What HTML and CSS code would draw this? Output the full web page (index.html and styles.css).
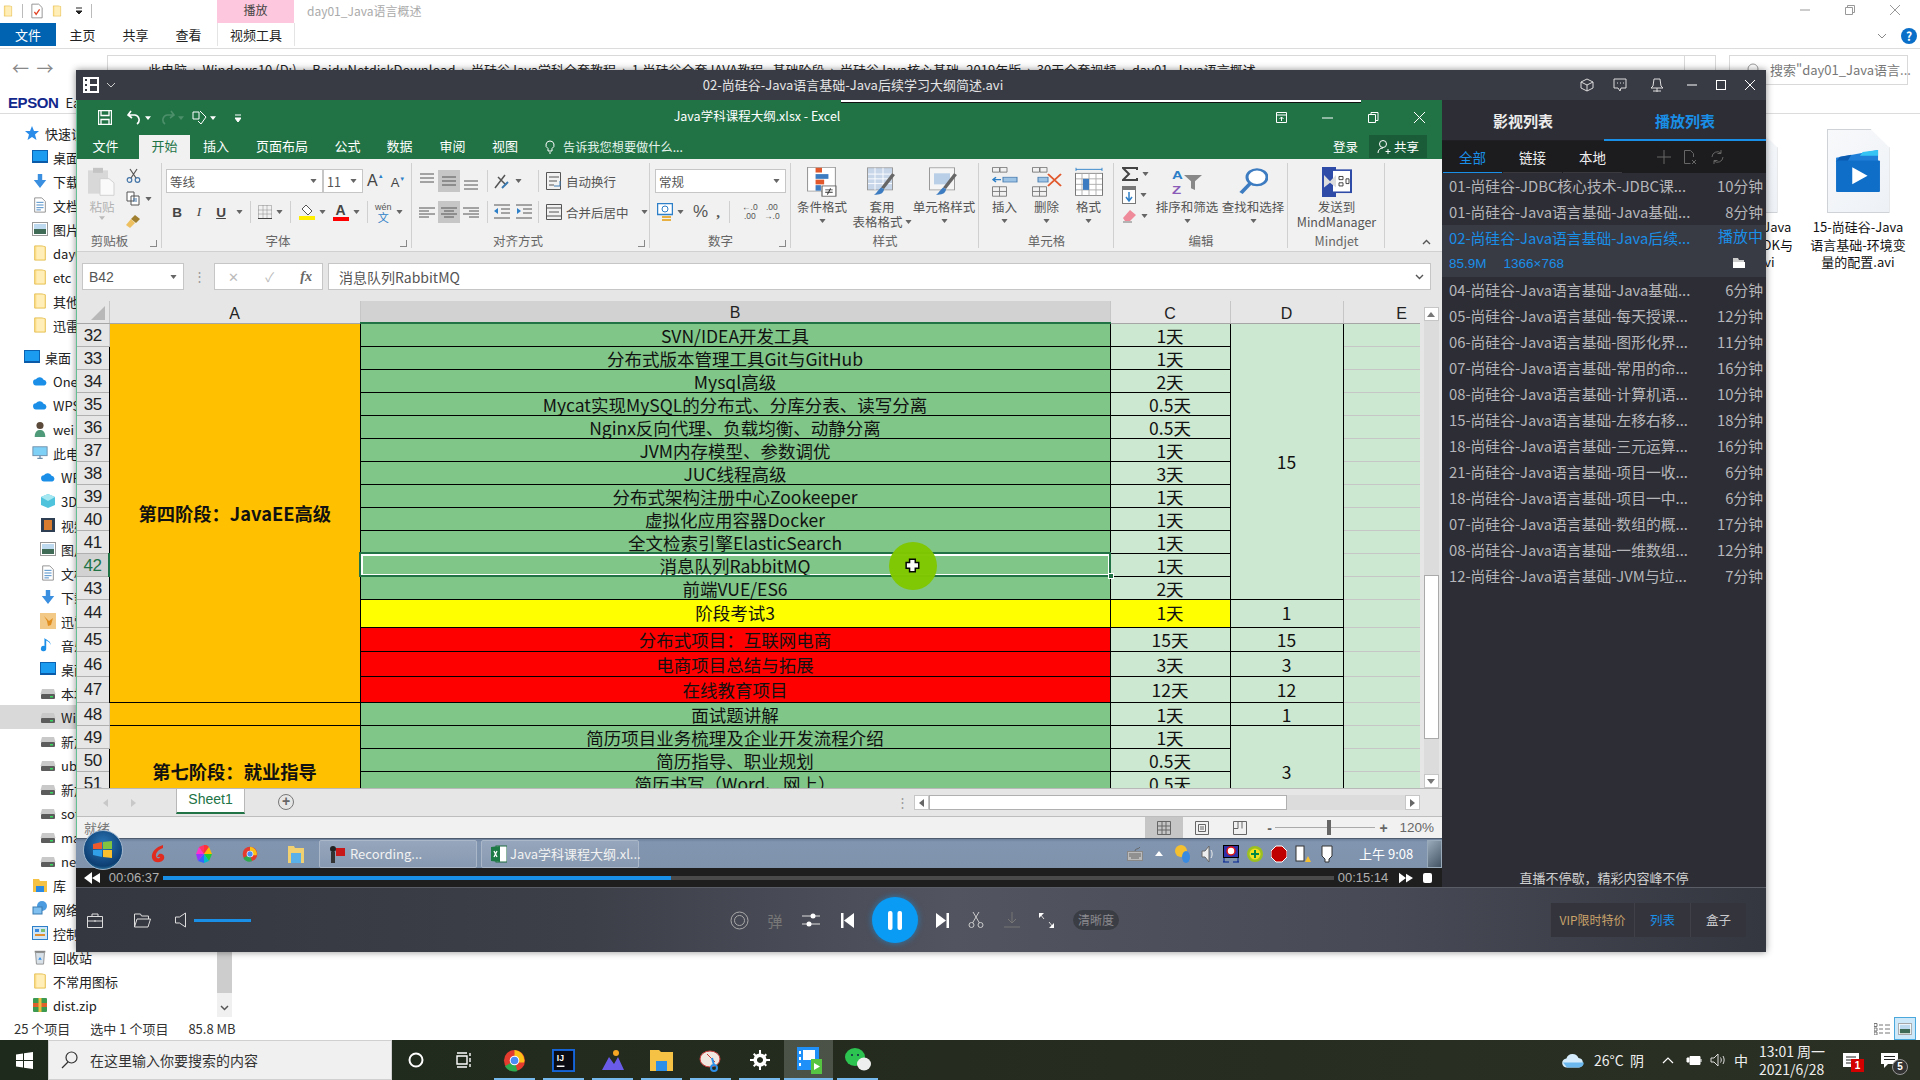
FILE: index.html
```html
<!DOCTYPE html>
<html lang="zh-CN">
<head>
<meta charset="utf-8">
<title>day01_Java语言概述</title>
<link rel="stylesheet" href="styles.css">
</head>
<body>
<svg class="defs" width="0" height="0">
  <symbol id="folder" viewBox="0 0 14 18"><path d="M1 1h8l4 1v15H1z" fill="#ffe08d" stroke="#e3bd4f"/><path d="M3 2h9v14H3z" fill="#ffeeb8"/></symbol>
  <symbol id="disk" viewBox="0 0 16 16"><path d="M2 4h12l1.5 5h-15z" fill="#c9c9c9"/><rect x="1" y="9" width="14" height="5" rx="1" fill="#5c5c5c"/><rect x="10" y="11" width="3" height="1.5" fill="#38d860"/></symbol>
  <symbol id="desk" viewBox="0 0 16 14"><rect x=".5" y=".5" width="15" height="12" fill="#1b9cf0" stroke="#0a62b0"/><path d="M.5 11h15v2H.5z" fill="#0a5aa8"/></symbol>
  <symbol id="wcloud" viewBox="0 0 18 12"><path d="M5 11a3.5 3.5 0 0 1-.6-7A5 5 0 0 1 13 4.6 3.3 3.3 0 0 1 14 11z" fill="#1b8fe8"/></symbol>
  <symbol id="down" viewBox="0 0 16 18"><path d="M5.5 1h5v7H15l-7 9-7-9h4.5z" fill="#3b8fe0"/></symbol>
  <symbol id="doc" viewBox="0 0 14 18"><path d="M1 1h8l4 4v12H1z" fill="#fff" stroke="#8a8a8a"/><path d="M3 6h8M3 9h8M3 12h8M3 14.500h5" stroke="#3a7fc0"/></symbol>
  <symbol id="pic" viewBox="0 0 16 14"><rect x=".5" y=".5" width="15" height="13" fill="#fff" stroke="#999"/><rect x="2" y="2" width="12" height="5" fill="#bcd9ef"/><rect x="2" y="7" width="12" height="5" fill="#3f6a55"/></symbol>
  <symbol id="pc" viewBox="0 0 18 16"><rect x="1" y="1" width="16" height="10" fill="#7fd0f7" stroke="#6a8ca8"/><path d="M6 14h6M9 11v3" stroke="#6a8ca8" stroke-width="1.500"/></symbol>
  <symbol id="caret" viewBox="0 0 8 5"><path d="M0 0h8L4 5z" fill="#666"/></symbol>
</svg>

<div class="explorer">
  <div class="ex-title">
    <div class="qat">
      <svg class="ico16" viewBox="0 0 10 18"><use href="#folder"/></svg>
      <span class="qsep"></span>
      <svg class="ico16" viewBox="0 0 14 18"><path d="M1 1h8l4 4v12H1z" fill="#fff" stroke="#888"/><path d="M4 10l2 3 4-6" fill="none" stroke="#e04020" stroke-width="1.500"/></svg>
      <svg class="ico16" viewBox="0 0 10 18"><use href="#folder"/></svg>
      <svg class="ico8" viewBox="0 0 8 8"><path d="M1 1h6M1 4h6L4 7z" stroke="#222" fill="#222"/></svg>
      <span class="qsep"></span>
    </div>
    <div class="ex-play">播放</div>
    <div class="ex-name">day01_Java语言概述</div>
    <div class="ex-winbtns">
      <svg width="10" height="10" viewBox="0 0 10 10"><path d="M0 5h10" stroke="#999"/></svg>
      <svg width="10" height="10" viewBox="0 0 10 10"><path d="M.5 2.500h7v7h-7zM2.500 2.500v-2h7v7h-2" fill="none" stroke="#999"/></svg>
      <svg width="10" height="10" viewBox="0 0 10 10"><path d="M0 0l10 10M10 0L0 10" stroke="#999"/></svg>
    </div>
  </div>
  <div class="ex-tabs">
    <span class="ex-file">文件</span>
    <span class="ex-tab">主页</span>
    <span class="ex-tab">共享</span>
    <span class="ex-tab">查看</span>
    <span class="ex-tool">视频工具</span>
    <span class="ex-tabright">
      <svg width="10" height="6" viewBox="0 0 10 6"><path d="M1 1l4 4 4-4" fill="none" stroke="#888"/></svg>
      <span class="ex-help">?</span>
    </span>
  </div>
  <div class="ex-nav">
    <span class="nav-arrows">←&nbsp;&nbsp;→</span>
    <div class="ex-addr"><span class="addr-text">此电脑 &nbsp;›&nbsp; Windows10 (D:) &nbsp;›&nbsp; BaiduNetdiskDownload &nbsp;›&nbsp; 尚硅谷Java学科全套教程 &nbsp;›&nbsp; 1.尚硅谷全套JAVA教程--基础阶段 &nbsp;›&nbsp; 尚硅谷Java核心基础_2019年版 &nbsp;›&nbsp; 30天全套视频 &nbsp;›&nbsp; day01_Java语言概述</span><span class="addr-end"></span></div>
    <div class="ex-search"><svg width="14" height="14" viewBox="0 0 14 14"><circle cx="8" cy="6" r="5" fill="none" stroke="#999"/><path d="M4.500 9.500L1 13" stroke="#999"/></svg>搜索"day01_Java语言...</div>
  </div>
  <div class="ex-sub"><b class="epson">EPSON</b> Easy Photo Print</div>
  <div class="ex-main">
    <div class="ex-side">
      <div class="sgroup">
        <div class="si l1"><svg viewBox="0 0 16 16"><path d="M8 1l2 5h5l-4 3.500 1.500 5.500L8 12l-4.500 3L5 9.500 1 6h5z" fill="#2b8be8"/></svg>快速访问</div>
        <div class="si l2"><svg viewBox="0 0 16 14"><use href="#desk"/></svg>桌面</div>
        <div class="si l2"><svg viewBox="0 0 16 18"><use href="#down"/></svg>下载</div>
        <div class="si l2"><svg viewBox="0 0 14 18"><use href="#doc"/></svg>文档</div>
        <div class="si l2"><svg viewBox="0 0 16 14"><use href="#pic"/></svg>图片</div>
        <div class="si l2"><svg viewBox="0 0 14 18"><use href="#folder"/></svg>day01_Java语言概述</div>
        <div class="si l2"><svg viewBox="0 0 14 18"><use href="#folder"/></svg>etc</div>
        <div class="si l2"><svg viewBox="0 0 14 18"><use href="#folder"/></svg>其他</div>
        <div class="si l2"><svg viewBox="0 0 14 18"><use href="#folder"/></svg>迅雷下载</div>
      </div>
      <div class="sgroup gap8">
        <div class="si l1"><svg viewBox="0 0 16 14"><use href="#desk"/></svg>桌面</div>
        <div class="si l2"><svg viewBox="0 0 18 12"><use href="#wcloud"/></svg>OneDrive</div>
        <div class="si l2"><svg viewBox="0 0 18 12"><use href="#wcloud"/></svg>WPS网盘</div>
        <div class="si l2"><svg viewBox="0 0 16 18"><circle cx="8" cy="5" r="4" fill="#5b4a3a"/><path d="M2 18c0-6 3-8 6-8s6 2 6 8z" fill="#4f9a78"/></svg>wei</div>
        <div class="si l2"><svg viewBox="0 0 18 16"><use href="#pc"/></svg>此电脑</div>
        <div class="si l3"><svg viewBox="0 0 18 12"><use href="#wcloud"/></svg>WPS网盘</div>
        <div class="si l3"><svg viewBox="0 0 16 16"><path d="M8 1l7 3v8l-7 3-7-3V4z" fill="#4fc3dc"/><path d="M8 8L1 4l7-3 7 3z" fill="#a5e8f2"/></svg>3D 对象</div>
        <div class="si l3"><svg viewBox="0 0 16 16"><rect x="1" y="1" width="14" height="14" fill="#2d3e52"/><rect x="4" y="3" width="8" height="10" fill="#d87c30"/></svg>视频</div>
        <div class="si l3"><svg viewBox="0 0 16 14"><use href="#pic"/></svg>图片</div>
        <div class="si l3"><svg viewBox="0 0 14 18"><use href="#doc"/></svg>文档</div>
        <div class="si l3"><svg viewBox="0 0 16 18"><use href="#down"/></svg>下载</div>
        <div class="si l3"><svg viewBox="0 0 16 16"><rect width="16" height="16" fill="#f3c987"/><path d="M4 3l5 5 4-3-2 7-3 1-1-5z" fill="#e08e20"/></svg>迅雷下载</div>
        <div class="si l3"><svg viewBox="0 0 16 18"><path d="M6 2v11a3 3 0 1 1-2-2.800V1c3 3 7 3 7 8-1-3-3-4-5-5z" fill="#1b8fe8"/></svg>音乐</div>
        <div class="si l3"><svg viewBox="0 0 16 14"><use href="#desk"/></svg>桌面</div>
        <div class="si l3"><svg viewBox="0 0 16 16"><use href="#disk"/></svg>本地磁盘 (C:)</div>
        <div class="si l3 sel-row"><svg viewBox="0 0 16 16"><use href="#disk"/></svg>Windows10 (D:)</div>
        <div class="si l3"><svg viewBox="0 0 16 16"><use href="#disk"/></svg>新加卷 (E:)</div>
        <div class="si l3"><svg viewBox="0 0 16 16"><use href="#disk"/></svg>ubuntu (F:)</div>
        <div class="si l3"><svg viewBox="0 0 16 16"><use href="#disk"/></svg>新加卷 (G:)</div>
        <div class="si l3"><svg viewBox="0 0 16 16"><use href="#disk"/></svg>soft (H:)</div>
        <div class="si l3"><svg viewBox="0 0 16 16"><use href="#disk"/></svg>mac (I:)</div>
        <div class="si l3"><svg viewBox="0 0 16 16"><use href="#disk"/></svg>new (J:)</div>
        <div class="si l2"><svg viewBox="0 0 16 16"><path d="M1 2h6l1 2h7v11H1z" fill="#f6c245"/><rect x="4" y="9" width="8" height="6" fill="#2c8be0"/></svg>库</div>
        <div class="si l2"><svg viewBox="0 0 16 16"><circle cx="10" cy="5" r="5" fill="#4a9be0"/><rect x="1" y="6" width="9" height="7" fill="#7fc0f0" stroke="#3a7ab0"/></svg>网络</div>
        <div class="si l2"><svg viewBox="0 0 16 14"><rect x=".5" y=".5" width="15" height="13" fill="#cfe6f8" stroke="#2d7fc8"/><rect x="3" y="3" width="4" height="3" fill="#3a8ae0"/><rect x="9" y="3" width="4" height="3" fill="#7ac070"/><rect x="3" y="8" width="10" height="2" fill="#e09030"/></svg>控制面板</div>
        <div class="si l2"><svg viewBox="0 0 14 18"><path d="M2 4h10l-1 13H3z" fill="#d8e0e8" stroke="#8c8c8c"/><path d="M1 3h12" stroke="#888" stroke-width="2"/><path d="M5 12l2-3 2 3z" fill="#2b8be8"/></svg>回收站</div>
        <div class="si l2"><svg viewBox="0 0 14 18"><use href="#folder"/></svg>不常用图标</div>
        <div class="si l2"><svg viewBox="0 0 16 16"><rect x="1" y="1" width="14" height="14" rx="1" fill="#3c9a50"/><rect x="1" y="6" width="14" height="4" fill="#e0602c"/><rect x="6.500" y="1" width="3" height="14" fill="#e8c040"/></svg>dist.zip</div>
      </div>
      <div class="side-scroll">
        <div class="ss-thumb"></div>
        <svg width="9" height="6" viewBox="0 0 9 6"><path d="M1 1l3.500 3.500L8 1" fill="none" stroke="#555" stroke-width="1.500"/></svg>
      </div>
    </div>
    <div class="ex-files">
      <div class="tile">
        <div class="fileicon"></div>
        <p>14-尚硅谷-Java<br>语言基础-JDK与<br>JRE的.avi</p>
      </div>
      <div class="tile">
        <div class="fileicon">
          <svg class="clap" viewBox="0 0 46 44"><path d="M0 8l44-8v12H0z" fill="#1f7fd8"/><path d="M4 7l12-2-4 7H0z" fill="#0a5ab0"/><path d="M28 2l16-2v6H25z" fill="#35c4f4"/><rect y="11" width="46" height="33" rx="1" fill="#0f6ec8"/><path d="M17 18l16 9-16 9z" fill="#fff"/></svg>
        </div>
        <p>15-尚硅谷-Java<br>语言基础-环境变<br>量的配置.avi</p>
      </div>
    </div>
  </div>
  <div class="ex-status">
    <span>25 个项目</span><span>选中 1 个项目</span><span>85.8 MB</span>
    <span class="views">
      <svg width="17" height="12" viewBox="0 0 17 12"><path d="M0 .5h3v3H0zM0 5h3v3H0zM0 9h3v3H0zM5 2h4M11 2h5M5 6h4M11 6h5M5 10h4M11 10h5" fill="none" stroke="#777"/></svg>
      <span class="view-on"><svg width="14" height="12" viewBox="0 0 16 14"><use href="#pic"/></svg></span>
    </span>
  </div>
  <div class="taskbar">
    <span class="tb-start"><svg width="17" height="17" viewBox="0 0 17 17"><path d="M0 2.400l7-1v6.600H0zM8 1.200L17 0v8H8zM0 9h7v6.600l-7-1zM8 9h9v8l-9-1.200z" fill="#fff"/></svg></span>
    <span class="tb-search"><svg width="17" height="18" viewBox="0 0 17 18"><circle cx="10.500" cy="6.500" r="5.500" fill="none" stroke="#333" stroke-width="1.200"/><path d="M7 11L1 17" stroke="#333" stroke-width="1.200"/></svg>在这里输入你要搜索的内容</span>
    <span class="tb-btn"><svg width="16" height="16" viewBox="0 0 16 16"><circle cx="8" cy="8" r="6.500" fill="none" stroke="#fff" stroke-width="2"/></svg></span>
    <span class="tb-btn"><svg width="17" height="16" viewBox="0 0 17 16"><path d="M1 1h10M1 15h10M1 4h10v8H1zM14 1v3M14 6v4M14 12v3" fill="none" stroke="#fff" stroke-width="1.400"/></svg></span>
    <span class="tb-btn on first-on"><svg width="23" height="23" viewBox="0 0 24 24"><circle cx="12" cy="12" r="11" fill="#e33b2e"/><path d="M12 12L2 18A11 11 0 0 0 15 23z" fill="#2da94f"/><path d="M12 1a11 11 0 0 1 10 13H12z" fill="#fbc116"/><circle cx="12" cy="12" r="5" fill="#fff"/><circle cx="12" cy="12" r="4" fill="#4a8bf5"/></svg></span>
    <span class="tb-btn on"><svg width="23" height="23" viewBox="0 0 24 24"><rect width="24" height="24" fill="#1565d8"/><rect x="2" y="2" width="20" height="20" fill="#0a0a12"/><text x="5" y="13" font-size="9" font-weight="700" font-family="Liberation Sans" fill="#fff">IJ</text><path d="M5 18h8" stroke="#fff" stroke-width="1.500"/></svg></span>
    <span class="tb-btn on"><svg width="24" height="22" viewBox="0 0 24 22"><path d="M1 21L8 8l5 7 4-7 6 13z" fill="#6a5ce8"/><circle cx="15" cy="4" r="3" fill="#f5a623"/></svg></span>
    <span class="tb-btn on"><svg width="23" height="22" viewBox="0 0 23 22"><path d="M0 1h9l2 2h12v19H0z" fill="#f6c245"/><rect x="6" y="12" width="11" height="10" fill="#2d8ee8"/></svg></span>
    <span class="tb-btn on"><svg width="24" height="24" viewBox="0 0 24 24"><ellipse cx="11" cy="11" rx="10" ry="8" fill="#f0e8e0" stroke="#c83a3a"/><path d="M8 6l8 8" stroke="#c83a3a"/><circle cx="15" cy="20" r="3" fill="none" stroke="#2d8ee8" stroke-width="2"/><path d="M15 17l-2-7" stroke="#2d8ee8" stroke-width="2"/></svg></span>
    <span class="tb-btn on"><svg width="20" height="20" viewBox="0 0 20 20"><path d="M10 3.500a6.500 6.500 0 1 0 .01 0zM10 7a3 3 0 1 1-.01 0z" fill="#fff" fill-rule="evenodd"/><path d="M9 0h2v4H9zM9 16h2v4H9zM0 9h4v2H0zM16 9h4v2h-4zM3 4.400l1.400-1.400 3 3-1.400 1.400zM12.600 13.400l1.400-1.400 3 3-1.400 1.400zM3 15.600l3-3 1.400 1.400-3 3zM12.600 6.600l3-3 1.400 1.400-3 3z" fill="#fff"/></svg></span>
    <span class="tb-btn on act"><svg width="26" height="27" viewBox="0 0 26 27"><rect x="1" y="0" width="22" height="23" fill="#1e90f8"/><rect x="7" y="3" width="12" height="10" fill="#fff"/><path d="M3 4h2v3H3zM3 10h2v3H3zM3 16h2v3H3z" fill="#fff"/><rect x="15" y="12" width="11" height="15" fill="#56c440"/><path d="M18 16l6 3.500-6 3.500z" fill="#fff"/></svg></span>
    <span class="tb-btn on"><svg width="26" height="24" viewBox="0 0 26 24"><ellipse cx="10" cy="9" rx="10" ry="9" fill="#2dc350"/><ellipse cx="19" cy="16" rx="7" ry="6.500" fill="#eee"/><circle cx="7" cy="7" r="1" fill="#124"/><circle cx="13" cy="7" r="1" fill="#124"/></svg></span>
    <span class="tray">
      <svg width="22" height="16" viewBox="0 0 22 16"><path d="M5 15.500a4.500 4.500 0 0 1-.6-9A6.500 6.500 0 0 1 16.500 6a4.800 4.800 0 0 1 .5 9.500z" fill="#d4ecfb"/><path d="M5 15.500h12a4.800 4.800 0 0 0 4.800-5H1z" fill="#6ab8ee"/></svg>
      <span class="t-temp">26°C&nbsp;&nbsp;阴</span>
      <svg class="t-up" width="12" height="7" viewBox="0 0 12 7"><path d="M1 6l5-5 5 5" fill="none" stroke="#fff" stroke-width="1.200"/></svg>
      <svg width="16" height="12" viewBox="0 0 16 12"><path d="M4 2.500h10v8H4zM1 4v4h2V4zM15 5v3" fill="#fff" stroke="#fff"/></svg>
      <svg width="16" height="14" viewBox="0 0 16 14"><path d="M1 5h3l4-4v12L4 9H1zM10.500 4.500c1 1.500 1 3.500 0 5M13 3c1.500 2.500 1.500 5.500 0 8" fill="none" stroke="#ddd"/></svg>
      <span class="t-ime">中</span>
      <span class="t-clock">13:01 周一<br>2021/6/28</span>
      <span class="t-note"><svg width="16" height="14" viewBox="0 0 16 14"><path d="M0 0h16v14H0z" fill="#fff"/><path d="M3 4h10M3 7h10M3 10h6" stroke="#222"/></svg><i class="badge-red">1</i></span>
      <span class="t-action"><svg width="17" height="15" viewBox="0 0 17 15"><path d="M0 0h17v11H7l-4 4v-4H0z" fill="#fff"/><path d="M3 3.500h11M3 6.500h11" stroke="#222"/></svg><i class="badge-round">5</i></span>
    </span>
  </div>
</div>

<div class="player">
  <div class="p-title">
    <svg class="p-logo" width="16" height="16" viewBox="0 0 16 16"><path d="M0 0h16v16H0zM2 2v2h2V2zM2 7v2h2V7zM2 12v2h2v-2zM7 2v5h7V2zM7 9v5h7V9z" fill="#fff" fill-rule="evenodd"/></svg>
    <svg width="10" height="6" viewBox="0 0 10 6"><path d="M1 1l4 4 4-4" fill="none" stroke="#ccc"/></svg>
    <span class="p-name">02-尚硅谷-Java语言基础-Java后续学习大纲简述.avi</span>
    <span class="p-winbtns">
      <svg width="14" height="14" viewBox="0 0 14 14"><path d="M7 1l6 3v6l-6 3-6-3V4zM1 4l6 3 6-3M7 7v6" fill="none" stroke="#ddd"/></svg>
      <svg width="14" height="14" viewBox="0 0 14 14"><path d="M1 1h12v9H8l-1 3-2-3H1z" fill="none" stroke="#ddd"/><path d="M4 5h1M7 5h1M10 5h1" stroke="#ddd"/></svg>
      <svg class="pw-gap" width="12" height="14" viewBox="0 0 12 14"><path d="M3 1h6l1 7 2 2H0l2-2zM6 10v4M2 13h8" fill="none" stroke="#ddd"/></svg>
      <svg class="pw-gap" width="10" height="14" viewBox="0 0 10 14"><path d="M0 7h10" stroke="#fff"/></svg>
      <svg width="10" height="14" viewBox="0 0 10 14"><rect x=".5" y="2.500" width="9" height="9" fill="none" stroke="#fff"/></svg>
      <svg width="10" height="14" viewBox="0 0 10 14"><path d="M0 2l10 10M10 2L0 12" stroke="#fff"/></svg>
    </span>
  </div>
  <div class="p-main">
    <div class="p-left">
      <div class="excel">
        <div class="xl-head">
          <span class="xl-qat">
            <svg width="14" height="15" viewBox="0 0 14 15"><path d="M.5.500h13v14H.5zM3 .500v5h8v-5M3 14.500v-5h8v5" fill="none" stroke="#fff" stroke-width="1.300"/></svg>
            <svg class="q0" width="15" height="15" viewBox="0 0 15 15"><path d="M4 1L1 5l4 3M1 5h7a5 5 0 0 1 2 9" fill="none" stroke="#fff" stroke-width="1.600"/></svg>
            <svg width="6" height="4" viewBox="0 0 8 5"><path d="M0 0h8L4 5z" fill="#fff"/></svg>
            <svg class="q1" width="15" height="15" viewBox="0 0 15 15"><path d="M11 1l3 4-4 3M14 5H7a5 5 0 0 0-2 9" fill="none" stroke="#4c8f6a" stroke-width="1.600"/></svg>
            <svg width="6" height="4" viewBox="0 0 8 5"><path d="M0 0h8L4 5z" fill="#4c8f6a"/></svg>
            <svg class="q3" width="15" height="15" viewBox="0 0 15 15"><path d="M1 2h6v7H1zM8 1l6 6-5 7-3-3" fill="none" stroke="#fff"/></svg>
            <svg width="6" height="4" viewBox="0 0 8 5"><path d="M0 0h8L4 5z" fill="#fff"/></svg>
            <svg class="q2" width="6" height="8" viewBox="0 0 6 8"><path d="M0 1h6M0 4h6L3 8z" fill="#fff" stroke="#fff"/></svg>
          </span>
          <span class="xl-name">Java学科课程大纲.xlsx - Excel</span>
          <span class="xl-win">
            <svg width="11" height="11" viewBox="0 0 11 11"><path d="M.5.500h10v10H.5zM.5 3h10M5.500 9V5M3.500 7l2-2 2 2" fill="none" stroke="#fff"/></svg>
            <svg width="11" height="11" viewBox="0 0 11 11"><path d="M0 6h11" stroke="#fff"/></svg>
            <svg width="11" height="11" viewBox="0 0 11 11"><path d="M.5 2.500h7v8h-7zM3 2.500v-2h7v8H8" fill="none" stroke="#fff"/></svg>
            <svg width="11" height="11" viewBox="0 0 11 11"><path d="M0 0l11 11M11 0L0 11" stroke="#fff"/></svg>
          </span>
        </div>
        <div class="xl-tabs">
          <span class="xt w61">文件</span><span class="xt w51 act">开始</span><span class="xt w52">插入</span><span class="xt w80">页面布局</span><span class="xt w51">公式</span><span class="xt w53">数据</span><span class="xt w53">审阅</span><span class="xt w52">视图</span>
          <span class="xt-tell"><svg width="10" height="14" viewBox="0 0 10 14"><path d="M5 1a4 4 0 0 1 2 7.500V11H3V8.500A4 4 0 0 1 5 1zM4 13h2" fill="none" stroke="#fff"/></svg>告诉我您想要做什么...</span>
          <span class="xt-login">登录</span>
          <span class="xt-share"><svg width="15" height="15" viewBox="0 0 15 15"><circle cx="6" cy="5" r="3.500" fill="none" stroke="#fff"/><path d="M1 14c0-3 2-5 5-5M11 10v5M8.500 12.500h5" fill="none" stroke="#fff"/></svg>共享</span>
        </div>
        <div class="ribbon">
          <div class="grp g-clip">
            <div class="gb clip">
              <div class="paste">
                <svg width="30" height="30" viewBox="0 0 30 36" preserveAspectRatio="none"><rect x="1" y="4" width="20" height="28" fill="#d8d8d8"/><rect x="6" y="1" width="10" height="6" fill="#c4c4c4"/><path d="M13 14h9l5 5v15H13z" fill="#fafafa" stroke="#cfcfcf"/></svg>
                <span>粘贴</span>
                <svg width="6" height="4" viewBox="0 0 8 5"><path d="M0 0h8L4 5z" fill="#bbb"/></svg>
              </div>
              <div class="clipcol">
                <svg width="15" height="15" viewBox="0 0 15 15"><circle cx="3.500" cy="12" r="2.300" fill="none" stroke="#4475a8" stroke-width="1.200"/><circle cx="11.500" cy="12" r="2.300" fill="none" stroke="#4475a8" stroke-width="1.200"/><path d="M4 1l6 9M11 1L5 10" stroke="#555" stroke-width="1.200"/></svg>
                <span class="fx"><svg width="15" height="15" viewBox="0 0 15 15"><path d="M1 1h7v9H1zM5 5h8v9H5z" fill="#fff" stroke="#555"/><path d="M7 8h4M7 10h4" stroke="#4475a8"/></svg><svg class="cr" viewBox="0 0 8 5"><use href="#caret"/></svg></span>
                <svg width="15" height="15" viewBox="0 0 15 15"><path d="M9 1l5 4-4 4-5-4z" fill="#a08030"/><path d="M5 5l4 4-5 5-4-3z" fill="#eec060"/></svg>
              </div>
            </div>
            <div class="gl gl-clip">剪贴板<i class="launch"></i></div>
          </div>
          <div class="grp g-font">
            <div class="gb stack">
              <div class="rr">
                <span class="inp w156">等线<svg class="cr" viewBox="0 0 8 5"><use href="#caret"/></svg></span><span class="inp w40">11<svg class="cr" viewBox="0 0 8 5"><use href="#caret"/></svg></span>
                <span class="growa">A<sup>▲</sup></span><span class="growa sm">A<sup>▼</sup></span>
              </div>
              <div class="rr ml6">
                <b class="fb">B</b><i class="fb fi">I</i><u class="fb">U</u><svg class="cr" viewBox="0 0 8 5"><use href="#caret"/></svg>
                <span class="vs"></span>
                <svg width="14" height="14" viewBox="0 0 14 14"><path d="M.5.500h13v13H.5zM5 .500v13M9 .500v13M.5 5h13M.5 9h13" fill="none" stroke="#888" stroke-dasharray="1 1"/><path d="M0 13.500h14" stroke="#444"/></svg><svg class="cr" viewBox="0 0 8 5"><use href="#caret"/></svg>
                <span class="vs"></span>
                <span class="bucket"><svg width="14" height="12" viewBox="0 0 14 12"><path d="M6 1l6 6-4 4-6-6z" fill="#fff" stroke="#555"/></svg><em class="swy"></em></span><svg class="cr" viewBox="0 0 8 5"><use href="#caret"/></svg>
                <span class="bucket fa">A<em class="swr"></em></span><svg class="cr" viewBox="0 0 8 5"><use href="#caret"/></svg>
                <span class="vs"></span>
                <span class="wen">wén<b>文</b></span><svg class="cr" viewBox="0 0 8 5"><use href="#caret"/></svg>
              </div>
            </div>
            <div class="gl gl-font">字体<i class="launch"></i></div>
          </div>
          <div class="grp g-align">
            <div class="gb stack">
              <div class="rr ml4">
                <svg class="al" viewBox="0 0 22 22"><path d="M4 4h14M4 8h14M4 12h14" stroke="#555"/></svg>
                <svg class="al on" viewBox="0 0 22 22"><path d="M4 7h14M4 11h14M4 15h14" stroke="#555"/></svg>
                <svg class="al" viewBox="0 0 22 22"><path d="M4 11h14M4 15h14M4 19h14" stroke="#555"/></svg>
                <span class="vs"></span>
                <svg width="18" height="18" viewBox="0 0 18 18"><path d="M2 16L12 3M5 5l8 8" stroke="#555" stroke-width="1.500"/><path d="M9 16l6-6" stroke="#3a7ab0" stroke-width="2"/></svg><svg class="cr" viewBox="0 0 8 5"><use href="#caret"/></svg>
                <span class="vs vs2a"></span>
                <span class="lab"><svg width="16" height="18" viewBox="0 0 16 18"><path d="M.5.500h14v17H.5zM3 5h10M3 9h8M3 13h5" fill="none" stroke="#555"/><path d="M8 14h6v-5" fill="none" stroke="#3a7ab0"/></svg>自动换行</span>
              </div>
              <div class="rr ml4">
                <svg class="al" viewBox="0 0 22 22"><path d="M3 7h16M3 10h10M3 13h16M3 16h10" stroke="#555"/></svg>
                <svg class="al on" viewBox="0 0 22 22"><path d="M3 7h16M6 10h10M3 13h16M6 16h10" stroke="#555"/></svg>
                <svg class="al" viewBox="0 0 22 22"><path d="M3 7h16M9 10h10M3 13h16M9 16h10" stroke="#555"/></svg>
                <span class="vs"></span>
                <svg width="18" height="18" viewBox="0 0 18 18"><path d="M1 2h16M8 6h9M8 10h9M1 15h16" stroke="#555"/><path d="M1 8l4-3v6zM5 8H3" fill="#2d7fc8"/></svg>
                <svg class="ind2" width="18" height="18" viewBox="0 0 18 18"><path d="M1 2h16M8 6h9M8 10h9M1 15h16" stroke="#555"/><path d="M6 8L2 5v6z" fill="#2d7fc8"/></svg>
                <span class="vs vs2b"></span>
                <span class="lab"><svg width="16" height="16" viewBox="0 0 16 16"><path d="M.5.500h15v15H.5zM.5 4h15M.5 12h15M3 8h10" fill="none" stroke="#555"/></svg>合并后居中<svg class="cr sp" viewBox="0 0 8 5"><use href="#caret"/></svg></span>
              </div>
            </div>
            <div class="gl gl-align">对齐方式<i class="launch"></i></div>
          </div>
          <div class="grp g-num">
            <div class="gb stack">
              <div class="rr"><span class="inp w130">常规<svg class="cr" viewBox="0 0 8 5"><use href="#caret"/></svg></span></div>
              <div class="rr ml6">
                <svg width="16" height="18" viewBox="0 0 16 18"><rect x=".5" y=".5" width="15" height="11" fill="#fff" stroke="#2d7fc8" stroke-width="1.500"/><circle cx="8" cy="6" r="3" fill="none" stroke="#2d7fc8"/><rect x="5" y="13" width="9" height="2" fill="#e8b040"/><rect x="5" y="16" width="9" height="2" fill="#e8b040"/></svg><svg class="cr" viewBox="0 0 8 5"><use href="#caret"/></svg>
                <span class="pct">%</span><span class="cma">,</span>
                <span class="vs"></span>
                <span class="dec">←.0<br>.00</span><span class="dec">.00<br>→.0</span>
              </div>
            </div>
            <div class="gl">数字<i class="launch"></i></div>
          </div>
          <div class="grp g-style">
            <div class="gb bigs">
              <div class="big w62"><svg width="30" height="30" viewBox="0 0 28 38" preserveAspectRatio="none"><rect x=".5" y=".5" width="26" height="30" fill="#fff" stroke="#999"/><rect x="8" y="1" width="6" height="6" fill="#e0582c"/><rect x="8" y="9" width="12" height="6" fill="#3d7cc0"/><rect x="8" y="16" width="8" height="6" fill="#e0582c"/><rect x="8" y="23" width="5" height="7" fill="#3d7cc0"/><rect x="14" y="24" width="13" height="13" fill="#fff" stroke="#555"/><path d="M17 29h7M17 32h7M22 27l-3 8" stroke="#333"/></svg><span>条件格式</span><svg class="cr" viewBox="0 0 8 5"><use href="#caret"/></svg></div>
              <div class="big w58"><svg width="30" height="30" viewBox="0 0 30 38" preserveAspectRatio="none"><rect x=".5" y="1" width="25" height="28" fill="#c8d6ea" stroke="#999"/><path d="M1 9h24M1 15h24M1 21h24M8 1v28M16 1v28" stroke="#fff"/><path d="M28 10L17 28l-3-2L25 8z" fill="#666"/><path d="M14 26l3 2c0 5-4 8-10 7 3-2 4-6 7-9z" fill="#3d7cc0"/></svg><span>套用</span><span class="l2line">表格格式<svg class="cr" viewBox="0 0 8 5"><use href="#caret"/></svg></span></div>
              <div class="big w66"><svg width="30" height="30" viewBox="0 0 30 38" preserveAspectRatio="none"><rect x=".5" y="1" width="25" height="28" fill="#f5f5f5" stroke="#999"/><rect x="5" y="8" width="16" height="14" fill="#b9cfe8"/><path d="M28 10L17 28l-3-2L25 8z" fill="#666"/><path d="M14 26l3 2c0 5-4 8-10 7 3-2 4-6 7-9z" fill="#3d7cc0"/></svg><span>单元格样式</span><svg class="cr" viewBox="0 0 8 5"><use href="#caret"/></svg></div>
            </div>
            <div class="gl">样式</div>
          </div>
          <div class="grp g-cell">
            <div class="gb bigs ctr">
              <div class="big w42"><svg width="26" height="30" viewBox="0 0 26 38" preserveAspectRatio="none"><path d="M.5.500h7v6h-7zM8 .500h7v6H8zM.5 25h14v12H.5zM7.500 25v12M.5 31h14" fill="none" stroke="#777"/><rect x="11" y="13" width="14" height="6" fill="#9cc2e4" stroke="#4a7eb0"/><path d="M1 16h8M4 13l-3 3 3 3" fill="none" stroke="#2d7fc8" stroke-width="1.500"/></svg><span>插入</span><svg class="cr" viewBox="0 0 8 5"><use href="#caret"/></svg></div>
              <div class="big w42"><svg width="30" height="30" viewBox="0 0 30 38" preserveAspectRatio="none"><path d="M.5.500h7v6h-7zM8 .500h7v6H8zM.5 25h14v12H.5zM7.500 25v12M.5 31h14" fill="none" stroke="#777"/><rect x="6" y="13" width="10" height="6" fill="#9cc2e4" stroke="#4a7eb0"/><path d="M16 9l13 15M29 9L16 24" stroke="#e0582c" stroke-width="2"/></svg><span>删除</span><svg class="cr" viewBox="0 0 8 5"><use href="#caret"/></svg></div>
              <div class="big w42"><svg width="28" height="30" viewBox="0 0 28 38" preserveAspectRatio="none"><path d="M1 3h26M1 1v4M27 1v4" stroke="#2d7fc8"/><rect x=".5" y="8" width="27" height="28" fill="#fff" stroke="#777"/><path d="M7 8v28M14 8v28M21 8v28M1 15h26M1 22h26M1 29h26" stroke="#aaa"/><rect x="8" y="15" width="6" height="14" fill="#3d7cc0"/></svg><span>格式</span><svg class="cr" viewBox="0 0 8 5"><use href="#caret"/></svg></div>
            </div>
            <div class="gl">单元格</div>
          </div>
          <div class="grp g-edit">
            <div class="gb editg">
              <div class="editcol">
                <span class="fx"><svg width="16" height="14" viewBox="0 0 16 14"><path d="M15 3V1H1l6 6-6 6h14v-2" fill="none" stroke="#444" stroke-width="2"/></svg><svg class="cr" viewBox="0 0 8 5"><use href="#caret"/></svg></span>
                <span class="fx"><svg width="14" height="18" viewBox="0 0 14 18"><rect x=".5" y=".5" width="13" height="17" fill="#fff" stroke="#777"/><rect y="0" width="14" height="4" fill="#777"/><path d="M7 6v9M4 11l3 4 3-4" fill="none" stroke="#2d7fc8" stroke-width="1.500"/></svg><svg class="cr" viewBox="0 0 8 5"><use href="#caret"/></svg></span>
                <span class="fx"><svg width="15" height="14" viewBox="0 0 15 14"><path d="M8 1l6 5-6 6-5 0-2-3z" fill="#ef8a9a"/><path d="M1 13h9" stroke="#777"/></svg><svg class="cr" viewBox="0 0 8 5"><use href="#caret"/></svg></span>
              </div>
              <div class="big w66"><svg width="30" height="30" viewBox="0 0 30 38" preserveAspectRatio="none"><text x="0" y="15" font-size="15" font-family="Liberation Sans" font-weight="700" fill="#2d7fc8">A</text><text x="0" y="34" font-size="15" font-family="Liberation Sans" font-weight="700" fill="#8a5cb8">Z</text><path d="M12 10h18l-7 8v11l-4-2v-9z" fill="#888"/></svg><span>排序和筛选</span><svg class="cr" viewBox="0 0 8 5"><use href="#caret"/></svg></div>
              <div class="big w66"><svg width="30" height="30" viewBox="0 0 30 38" preserveAspectRatio="none"><circle cx="19" cy="13" r="10" fill="#fff" stroke="#3d7cc0" stroke-width="3"/><path d="M12 21L3 33" stroke="#3d7cc0" stroke-width="4"/></svg><span>查找和选择</span><svg class="cr" viewBox="0 0 8 5"><use href="#caret"/></svg></div>
            </div>
            <div class="gl">编辑</div>
          </div>
          <div class="grp g-mind">
            <div class="gb bigs ctr">
              <div class="big w97"><svg width="30" height="30" viewBox="0 0 30 38" preserveAspectRatio="none"><rect x="0" y="0" width="14" height="38" fill="#2f4ba8"/><rect x="10" y="4" width="19" height="28" fill="#fff" stroke="#2f4ba8" stroke-width="2"/><path d="M2 10l6 8 6-8v16l-6-6-6 6z" fill="#ddd"/><path d="M17 12h4v4h-4zM17 20h4v4h-4zM24 15h3v6h-3z" fill="none" stroke="#333"/></svg><span>发送到</span><span class="l2line">MindManager</span></div>
            </div>
            <div class="gl">Mindjet</div>
          </div>
          <span class="collapse"><svg width="9" height="6" viewBox="0 0 9 6"><path d="M1 5l3.500-3.500L8 5" fill="none" stroke="#555" stroke-width="1.400"/></svg></span>
        </div>
        <div class="fbar">
          <span class="namebox">B42<svg class="cr" viewBox="0 0 8 5"><use href="#caret"/></svg></span>
          <span class="fdots">⋮</span>
          <span class="fxbox"><b class="x">✕</b><b class="x">✓</b><i>fx</i></span>
          <span class="finput">消息队列RabbitMQ<svg width="9" height="6" viewBox="0 0 9 6"><path d="M1 1l3.500 3.500L8 1" fill="none" stroke="#555" stroke-width="1.400"/></svg></span>
        </div>
        <div class="gridwrap">
          <div class="gridclip">
            <table class="sheet">
              <colgroup><col class="c0"><col class="ca"><col class="cb"><col class="cc"><col class="cd"><col class="ce"></colgroup>
              <thead>
                <tr class="hh"><th class="corner"></th><th>A</th><th class="hsel">B</th><th>C</th><th>D</th><th class="he">E</th></tr>
              </thead>
              <tbody>
                <tr class="h23"><th>32</th><td class="or stage" rowspan="16">第四阶段：JavaEE高级</td><td class="gr">SVN/IDEA开发工具</td><td class="lt">1天</td><td class="lt" rowspan="12">15</td><td class="e"></td></tr>
                <tr class="h23"><th>33</th><td class="gr">分布式版本管理工具Git与GitHub</td><td class="lt">1天</td><td class="e"></td></tr>
                <tr class="h23"><th>34</th><td class="gr">Mysql高级</td><td class="lt">2天</td><td class="e"></td></tr>
                <tr class="h23"><th>35</th><td class="gr">Mycat实现MySQL的分布式、分库分表、读写分离</td><td class="lt">0.5天</td><td class="e"></td></tr>
                <tr class="h23"><th>36</th><td class="gr">Nginx反向代理、负载均衡、动静分离</td><td class="lt">0.5天</td><td class="e"></td></tr>
                <tr class="h23"><th>37</th><td class="gr">JVM内存模型、参数调优</td><td class="lt">1天</td><td class="e"></td></tr>
                <tr class="h23"><th>38</th><td class="gr">JUC线程高级</td><td class="lt">3天</td><td class="e"></td></tr>
                <tr class="h23"><th>39</th><td class="gr">分布式架构注册中心Zookeeper</td><td class="lt">1天</td><td class="e"></td></tr>
                <tr class="h23"><th>40</th><td class="gr">虚拟化应用容器Docker</td><td class="lt">1天</td><td class="e"></td></tr>
                <tr class="h23"><th>41</th><td class="gr">全文检索引擎ElasticSearch</td><td class="lt">1天</td><td class="e"></td></tr>
                <tr class="h23"><th class="hsel-row">42</th><td class="gr sel">消息队列RabbitMQ</td><td class="lt">1天</td><td class="e"></td></tr>
                <tr class="h23"><th>43</th><td class="gr">前端VUE/ES6</td><td class="lt">2天</td><td class="e"></td></tr>
                <tr class="h28 mid"><th>44</th><td class="yl">阶段考试3</td><td class="yl">1天</td><td class="lt">1</td><td class="e"></td></tr>
                <tr class="h24 mid"><th>45</th><td class="rd">分布式项目：互联网电商</td><td class="lt">15天</td><td class="lt">15</td><td class="e"></td></tr>
                <tr class="h25 mid"><th>46</th><td class="rd">电商项目总结与拓展</td><td class="lt">3天</td><td class="lt">3</td><td class="e"></td></tr>
                <tr class="h26 mid"><th>47</th><td class="rd">在线教育项目</td><td class="lt">12天</td><td class="lt">12</td><td class="e"></td></tr>
                <tr class="h23"><th>48</th><td class="or"></td><td class="gr">面试题讲解</td><td class="lt">1天</td><td class="lt">1</td><td class="e"></td></tr>
                <tr class="h23"><th>49</th><td class="or stage" rowspan="4">第七阶段：就业指导</td><td class="gr">简历项目业务梳理及企业开发流程介绍</td><td class="lt">1天</td><td class="lt" rowspan="4">3</td><td class="e"></td></tr>
                <tr class="h23"><th>50</th><td class="gr">简历指导、职业规划</td><td class="lt">0.5天</td><td class="e"></td></tr>
                <tr class="h23"><th>51</th><td class="gr">简历书写（Word、网上）</td><td class="lt">0.5天</td><td class="e"></td></tr>
                <tr class="h23"><th>52</th><td class="gr"></td><td class="lt"></td><td class="e"></td></tr>
              </tbody>
            </table>
            <span class="fill-handle"></span>
            <span class="cursor-dot"><svg width="16" height="16" viewBox="0 0 14 14"><path d="M4 1h5v3h3v5H9v3H4V9H1V4h3z" fill="#fff" stroke="#000" stroke-width="1.300"/></svg></span>
          </div>
          <div class="vscroll">
            <span class="vbtn"><svg width="8" height="5" viewBox="0 0 8 5"><path d="M0 5h8L4 0z" fill="#777"/></svg></span>
            <span class="vtrack"><span class="vthumb"></span></span>
            <span class="vbtn"><svg width="8" height="5" viewBox="0 0 8 5"><path d="M0 0h8L4 5z" fill="#777"/></svg></span>
          </div>
        </div>
        <div class="sheetbar">
          <span class="sb-nav"><svg width="5" height="8" viewBox="0 0 5 8"><path d="M5 0v8L0 4z" fill="#c8c8c8"/></svg><svg width="5" height="8" viewBox="0 0 5 8"><path d="M0 0v8l5-4z" fill="#c8c8c8"/></svg></span>
          <span class="sb-tab">Sheet1</span>
          <span class="sb-add">+</span>
          <span class="sb-dots">⋮</span>
          <span class="hscroll">
            <span class="hbtn"><svg width="5" height="8" viewBox="0 0 5 8"><path d="M5 0v8L0 4z" fill="#666"/></svg></span>
            <span class="hthumb"></span>
            <span class="htrack"></span>
            <span class="hbtn"><svg width="5" height="8" viewBox="0 0 5 8"><path d="M0 0v8l5-4z" fill="#666"/></svg></span>
          </span>
        </div>
        <div class="xstatus">
          <span>就绪</span>
          <span class="xs-right">
            <span class="vw on"><svg width="14" height="14" viewBox="0 0 14 14"><path d="M.5.500h13v13H.5zM5 .500v13M9 .500v13M.5 5h13M.5 9h13" fill="none" stroke="#666"/></svg></span>
            <span class="vw"><svg width="14" height="14" viewBox="0 0 14 14"><path d="M.5.500h13v13H.5zM3.500 3.500h7v7h-7zM5 6h4M5 8h4" fill="none" stroke="#666"/></svg></span>
            <span class="vw"><svg width="14" height="14" viewBox="0 0 14 14"><path d="M.5.500h13v13H.5zM5 .500v7M.5 7.500H5M9 .500v7" fill="none" stroke="#666"/></svg></span>
            <span class="zm zm-minus">-</span>
            <span class="slider"><i></i></span>
            <span class="zm">+</span>
            <span class="zpct">120%</span>
          </span>
        </div>
      </div>
      <div class="win7">
        <span class="orb"><svg width="22" height="22" viewBox="0 0 22 22"><path d="M1 5l9-2v7H1z" fill="#ef5a2c"/><path d="M11 3l9-1v8h-9z" fill="#82c342"/><path d="M1 11h9v7l-9-2z" fill="#32a0e8"/><path d="M11 11h9v8l-9-1z" fill="#fbc02d"/></svg></span>
        <span class="w7ic"><svg width="16" height="20" viewBox="0 0 16 20"><path d="M13 1C6 3 1 8 2 14c1 5 9 6 12 1 1-3-1-6-5-5L7 13l3 0c-1 3-5 1-4-3 1-3 4-5 7-6z" fill="#e02c20"/></svg></span>
        <span class="w7ic"><svg width="16" height="18" viewBox="0 0 16 18"><path d="M8 9L8 0a5 5 0 0 1 5 2z" fill="#f33"/><path d="M8 9l5-7 3 7z" fill="#fb0"/><path d="M8 9h8l-3 7z" fill="#2c3"/><path d="M8 9l5 7-5 2z" fill="#0bc"/><path d="M8 9v9l-6-2z" fill="#36f"/><path d="M8 9l-6 7-2-7z" fill="#93f"/><path d="M8 9H0l3-7z" fill="#f3c"/><path d="M8 9L3 2l5-2z" fill="#f36"/></svg></span>
        <span class="w7ic"><svg width="16" height="18" viewBox="0 0 24 24"><circle cx="12" cy="12" r="11" fill="#e33b2e"/><path d="M12 12L2 18A11 11 0 0 0 15 23z" fill="#2da94f"/><path d="M12 1a11 11 0 0 1 10 13H12z" fill="#fbc116"/><circle cx="12" cy="12" r="5" fill="#fff"/><circle cx="12" cy="12" r="4" fill="#4a8bf5"/></svg></span>
        <span class="w7ic"><svg width="16" height="18" viewBox="0 0 16 18"><path d="M0 1h6l1 2h9v15H0z" fill="#f0d070"/><rect x="3" y="8" width="10" height="10" fill="#5ab0e8"/></svg></span>
        <span class="w7task first"><svg width="16" height="20" viewBox="0 0 16 20"><circle cx="4" cy="5" r="3" fill="#222"/><rect x="2" y="8" width="4" height="11" fill="#333"/><rect x="7" y="4" width="9" height="8" fill="#c81818"/></svg>Recording...</span>
        <span class="w7task w7second"><svg width="16" height="18" viewBox="0 0 16 18"><rect x="5" y="1" width="11" height="16" fill="#fff" stroke="#1d6b3f"/><path d="M0 2l9-1v16l-9-1z" fill="#1d7a44"/><path d="M3 6l3 6M6 6l-3 6" stroke="#fff" stroke-width="1.300"/></svg>Java学科课程大纲.xl...</span>
        <span class="w7tray">
          <svg width="16" height="14" viewBox="0 0 16 14"><rect x=".5" y="4.500" width="15" height="9" fill="#bbb" stroke="#888"/><path d="M2 7h12M2 9h12M4 11h8M8 4c0-3 3-1 5-4" fill="none" stroke="#666"/></svg>
          <svg class="tr-c" width="8" height="5" viewBox="0 0 8 5"><path d="M0 5h8L4 0z" fill="#fff"/></svg>
          <svg width="16" height="20" viewBox="0 0 16 20"><circle cx="6" cy="7" r="6" fill="#f5c030"/><ellipse cx="11" cy="13" rx="4" ry="6" fill="#3a8ae0"/></svg>
          <svg class="tr-s" width="12" height="18" viewBox="0 0 12 18"><path d="M1 6h3l4-5v16l-4-5H1z" fill="#eee" stroke="#666"/><path d="M10 5c1.500 2 1.500 6 0 8" fill="none" stroke="#eee"/></svg>
          <svg width="16" height="18" viewBox="0 0 16 18"><rect x=".5" y=".5" width="15" height="12" fill="#3030a8" stroke="#000"/><circle cx="8" cy="6" r="4" fill="#fff" stroke="#e01010" stroke-width="1.500"/><path d="M0 17h6M10 17h6M1 13v4M15 13v4" stroke="#002090"/></svg>
          <svg width="16" height="16" viewBox="0 0 16 16"><circle cx="8" cy="8" r="8" fill="#9cc020"/><circle cx="8" cy="8" r="5.500" fill="#f0e020"/><path d="M8 4v8M4 8h8" stroke="#084" stroke-width="2"/></svg>
          <svg width="16" height="18" viewBox="0 0 16 18"><path d="M5 1h6l5 5v6l-5 5H5l-5-5V6z" fill="#c00000" stroke="#fff"/></svg>
          <svg width="16" height="18" viewBox="0 0 16 18"><rect x="1" y="1" width="8" height="15" fill="#fff" stroke="#333"/><path d="M10 17l3-6 3 6z" fill="#f5c030"/></svg>
          <svg width="16" height="18" viewBox="0 0 16 18"><path d="M3 1h10v10l-3 3v3H6v-3L3 11z" fill="#fff" stroke="#333"/></svg>
          <span class="w7clock">上午 9:08</span>
          <span class="w7show"></span>
        </span>
      </div>
      <div class="pbar">
        <svg width="16" height="12" viewBox="0 0 16 12"><path d="M8 0v12L0 6zM16 1v10L8 6z" fill="#fff"/></svg>
        <span class="ptime">00:06:37</span>
        <span class="ptrack"><span class="pplayed"></span></span>
        <span class="ptime p2">00:15:14</span>
        <svg class="pfw" width="14" height="12" viewBox="0 0 16 12"><path d="M0 0v12l8-6zM8 1v10l8-5z" fill="#fff"/></svg>
        <span class="pstop"></span>
      </div>
    </div>
    <div class="panel">
      <div class="pn-tabs"><span class="pt">影视列表</span><span class="pt on">播放列表</span></div>
      <div class="pn-sub">
        <span class="ps on">全部</span><span class="ps">链接</span><span class="ps">本地</span>
        <span class="ps-ic">
          <svg width="14" height="14" viewBox="0 0 14 14"><path d="M7 0v14M0 7h14" stroke="#666"/></svg>
          <svg width="13" height="14" viewBox="0 0 13 14"><path d="M.5.500h6l3 3V7M.5.500v13h6M8 10l4 4M12 10l-4 4" fill="none" stroke="#666"/></svg>
          <svg width="15" height="14" viewBox="0 0 15 14"><path d="M2 7a5.500 5.500 0 0 1 9-4M13 7a5.500 5.500 0 0 1-9 4M11 0v3.500H7.500M4 14v-3.500h3.500" fill="none" stroke="#666"/></svg>
        </span>
      </div>
      <ul class="plist">
        <li><span class="pn">01-尚硅谷-JDBC核心技术-JDBC课...</span><span>10分钟</span></li>
        <li><span class="pn">01-尚硅谷-Java语言基础-Java基础...</span><span>8分钟</span></li>
        <li class="cur">
          <div class="cur1"><span class="pn">02-尚硅谷-Java语言基础-Java后续...</span><span class="playing">播放中</span></div>
          <div class="cur2"><span>85.9M</span><span class="res">1366×768</span><svg width="12" height="10" viewBox="0 0 12 10"><path d="M0 0h5l1 2h5v8H0z" fill="#ccc"/><path d="M0 4h12v6H0z" fill="#fff"/></svg></div>
        </li>
        <li><span class="pn">04-尚硅谷-Java语言基础-Java基础...</span><span>6分钟</span></li>
        <li><span class="pn">05-尚硅谷-Java语言基础-每天授课...</span><span>12分钟</span></li>
        <li><span class="pn">06-尚硅谷-Java语言基础-图形化界...</span><span>11分钟</span></li>
        <li><span class="pn">07-尚硅谷-Java语言基础-常用的命...</span><span>16分钟</span></li>
        <li><span class="pn">08-尚硅谷-Java语言基础-计算机语...</span><span>10分钟</span></li>
        <li><span class="pn">15-尚硅谷-Java语言基础-左移右移...</span><span>18分钟</span></li>
        <li><span class="pn">18-尚硅谷-Java语言基础-三元运算...</span><span>16分钟</span></li>
        <li><span class="pn">21-尚硅谷-Java语言基础-项目一收...</span><span>6分钟</span></li>
        <li><span class="pn">18-尚硅谷-Java语言基础-项目一中...</span><span>6分钟</span></li>
        <li><span class="pn">07-尚硅谷-Java语言基础-数组的概...</span><span>17分钟</span></li>
        <li><span class="pn">08-尚硅谷-Java语言基础-一维数组...</span><span>12分钟</span></li>
        <li><span class="pn">12-尚硅谷-Java语言基础-JVM与垃...</span><span>7分钟</span></li>
      </ul>
      <div class="pn-foot">直播不停歇，精彩内容峰不停</div>
    </div>
  </div>
  <div class="controls">
    <div class="c-left">
      <svg width="16" height="15" viewBox="0 0 16 15"><path d="M.5 3.500h15v11H.5zM5 3.500V1h6v2.500M.5 8h15M8 7v2" fill="none" stroke="#ddd"/></svg>
      <svg class="cl2" width="17" height="15" viewBox="0 0 17 15"><path d="M.5 14V1h6l1 2h7v3M.5 14L3 6h13.500l-2.500 8z" fill="none" stroke="#ddd"/></svg>
      <svg class="cl3" width="11" height="16" viewBox="0 0 11 16"><path d="M.5 5h4l6-4v14l-6-4h-4z" fill="none" stroke="#ddd"/></svg>
      <span class="vol"></span>
    </div>
    <div class="c-mid">
      <span class="ci"><svg width="19" height="19" viewBox="0 0 19 19"><circle cx="9.500" cy="9.500" r="8.500" fill="none" stroke="#aaa"/><circle cx="9.500" cy="9.500" r="5" fill="none" stroke="#aaa"/></svg></span>
      <span class="ci dim">弹</span>
      <span class="ci"><svg width="18" height="16" viewBox="0 0 18 16"><path d="M0 4h18M0 12h18" stroke="#ddd"/><circle cx="11" cy="4" r="2.500" fill="#fff"/><circle cx="7" cy="12" r="2.500" fill="#fff"/></svg></span>
      <span class="ci"><svg width="13" height="15" viewBox="0 0 13 15"><path d="M0 0h2.500v15H0zM13 0v15L3 7.500z" fill="#fff"/></svg></span>
      <span class="playbtn"><svg width="14" height="19" viewBox="0 0 14 19"><rect width="4.500" height="19" rx="2" fill="#fff"/><rect x="9.500" width="4.500" height="19" rx="2" fill="#fff"/></svg></span>
      <span class="ci"><svg width="13" height="15" viewBox="0 0 13 15"><path d="M10.500 0H13v15h-2.500zM0 0v15l10-7.500z" fill="#fff"/></svg></span>
      <span class="ci ci-tight"><svg width="16" height="16" viewBox="0 0 16 16"><circle cx="3.500" cy="13" r="2.500" fill="none" stroke="#ccc"/><circle cx="12.500" cy="13" r="2.500" fill="none" stroke="#ccc"/><path d="M4.500 11L11 0M11.500 11L5 0" stroke="#ccc"/></svg></span>
      <span class="ci"><svg width="16" height="16" viewBox="0 0 16 16"><path d="M8 0v11M4 7l4 4 4-4M0 15h16" fill="none" stroke="#777"/></svg></span>
      <span class="ci ci-tight"><svg width="15" height="15" viewBox="0 0 15 15"><path d="M1 1l4 5M14 14l-4-5" stroke="#ddd"/><path d="M0 0h5L0 5zM15 15h-5l5-5z" fill="#fff"/></svg></span>
      <span class="clarity">清晰度</span>
    </div>
    <div class="c-right">
      <span class="cbtn vip">VIP限时特价</span><span class="cbtn blue">列表</span><span class="cbtn">盒子</span>
    </div>
  </div>
  <span class="p-line"></span>
</div>
</body>
</html>
```
FILE: styles.css
```css
* { box-sizing: border-box; }
html, body { margin: 0; padding: 0; }
body {
  width: 1920px; height: 1080px; overflow: hidden; position: relative; background: #fff;
  font-family: "Noto Sans CJK SC", "Noto Sans", "Liberation Sans", sans-serif;
  font-size: 13px; color: #222;
}
svg { display: block; flex: none; }
.defs { position: absolute; }
.cr { width: 7px; height: 4px; margin-left: 4px; }

/* explorer window */
.explorer { height: 1080px; display: flex; flex-direction: column; background: #fff; }
.ex-title { height: 23px; display: flex; align-items: flex-start; flex: none; }
.qat { width: 217px; display: flex; align-items: center; gap: 8px; padding: 3px 0 0 2px; }
.ico16 { width: 12px; height: 16px; }
.ico8 { width: 8px; height: 8px; margin-left: 4px; }
.qsep { width: 1px; height: 14px; background: #bbb; }
.ex-play { width: 77px; height: 23px; background: #fdc8dd; text-align: center; line-height: 20px; font-size: 12px; color: #444; }
.ex-name { margin-left: 13px; line-height: 22px; color: #aaa; font-size: 12px; }
.ex-winbtns { margin-left: auto; display: flex; gap: 35px; padding: 5px 20px 0 0; }
.ex-tabs { height: 26px; flex: none; display: flex; align-items: stretch; border-bottom: 1px solid #dcdcdc; font-size: 13px; }
.ex-file { width: 56px; height: 23px; background: #0063b1; color: #fff; text-align: center; line-height: 23px; }
.ex-tab { width: 53px; height: 23px; text-align: center; line-height: 24px; }
.ex-tool { width: 78px; margin-left: 2px; height: 23px; text-align: center; line-height: 24px; border-left: 1px solid #e4e4e4; border-right: 1px solid #e4e4e4; }
.ex-tabright { margin-left: auto; display: flex; align-items: center; gap: 14px; padding: 0 3px 0 0; }
.ex-help { width: 16px; height: 16px; border-radius: 50%; background: #0a6fc8; color: #fff; font-weight: 700; font-size: 12px; line-height: 16px; text-align: center; }
.ex-nav { height: 45px; flex: none; display: flex; align-items: flex-start; padding-top: 6px; }
.nav-arrows { width: 107px; color: #888; padding-left: 12px; font-size: 17px; line-height: 26px; }
.ex-addr { width: 1609px; height: 30px; border: 1px solid #d9d9d9; padding-left: 40px; line-height: 28px; font-size: 13px; white-space: nowrap; display: flex; }
.addr-text { flex: 1; overflow: hidden; }
.addr-end { width: 31px; border-left: 1px solid #d9d9d9; }
.ex-search { width: 179px; height: 30px; margin-left: 13px; border: 1px solid #d9d9d9; padding-left: 15px; line-height: 28px; color: #777; white-space: nowrap; display: flex; align-items: center; gap: 11px; font-size: 13px; }
.ex-sub { flex: none; padding-left: 8px; border-bottom: 1px solid #dcdcdc; height: 20px; line-height: 18px; white-space: nowrap; overflow: hidden; }
.epson { color: #13288c; font-size: 15px; letter-spacing: -.4px; font-family: "Liberation Sans", sans-serif; margin-right: 4px; }
.ex-main { flex: 1; display: flex; min-height: 0; position: relative; }
.ex-side { width: 232px; padding-top: 7px; position: relative; }
.sgroup.gap8 { margin-top: 8px; }
.si { height: 24px; display: flex; align-items: center; white-space: nowrap; overflow: hidden; font-size: 13px; }
.si svg { width: 16px; height: 16px; margin-right: 5px; }
.si.l1 { padding-left: 24px; }
.si.l2 { padding-left: 32px; }
.si.l3 { padding-left: 40px; }
.sel-row { background: #d9d9d9; }
.side-scroll { position: absolute; right: 0; bottom: 0; width: 15px; height: 70px; background: #f0f0f0; display: flex; flex-direction: column; align-items: center; justify-content: space-between; padding-bottom: 6px; }
.ss-thumb { width: 15px; height: 46px; background: #cdcdcd; }
.ex-files { flex: 1; display: flex; justify-content: flex-end; padding: 15px 14px 0 0; gap: 16px; }
.tile { width: 96px; display: flex; flex-direction: column; align-items: center; }
.tile p { margin: 0; text-align: center; font-size: 13px; line-height: 17.500px; color: #111; white-space: nowrap; }
.fileicon { width: 63px; height: 84px; margin-bottom: 5px; background: linear-gradient(135deg, #f8f9fb, #edf1f6); border: 1px solid #cfd2d6; clip-path: polygon(0 0, 70% 0, 100% 22%, 100% 100%, 0 100%); display: flex; align-items: center; justify-content: center; }
.clap { width: 46px; height: 42px; }
.ex-status { height: 23px; display: flex; align-items: center; padding-left: 14px; gap: 20px; flex: none; font-size: 13px; color: #333; }
.ex-status .views { margin-left: auto; display: flex; align-items: center; gap: 3px; padding-right: 4px; }
.view-on { width: 22px; height: 23px; background: #cde8f8; border: 1px solid #4aa8dc; display: flex; align-items: center; justify-content: center; }
.taskbar { height: 40px; flex: none; background: linear-gradient(90deg, #1e2a1c, #252c1f 50%, #2b3024); display: flex; align-items: stretch; color: #fff; }
.tb-start { width: 48px; display: flex; align-items: center; justify-content: center; }
.tb-search { width: 344px; background: #f0f0f0; border: 1px solid #d0d0d0; color: #333; display: flex; align-items: center; gap: 12px; padding-left: 12px; font-size: 14px; }
.tb-btn { width: 48px; display: flex; align-items: center; justify-content: center; position: relative; }
.tb-btn.on { width: 49px; }
.tb-btn.first-on { margin-left: 2px; }
.tb-btn.on::after { content: ""; position: absolute; left: 4px; right: 4px; bottom: 0; height: 2px; background: #76b9ed; }
.tb-btn.act { background: rgba(255, 255, 255, .18); }
.tb-btn.act::after { left: 0; right: 0; }
.tray { margin-left: auto; display: flex; align-items: center; font-size: 13px; color: #eee; padding-right: 11px; }
.t-temp { margin: 0 0 0 10px; font-size: 14px; }
.t-up { margin: 0 12px 0 18px; }
.tray > svg + svg { margin-right: 8px; }
.t-ime { margin: 0 11px 0 0; font-size: 14px; }
.t-clock { line-height: 18px; white-space: nowrap; margin-right: 8px; width: 64px; font-size: 14px; }
.t-note, .t-action { position: relative; width: 39px; height: 40px; display: flex; align-items: center; justify-content: center; }
.badge-red { position: absolute; left: 20px; top: 19px; width: 13px; height: 13px; background: #d40000; color: #fff; font: 700 10px/13px "Liberation Sans", sans-serif; text-align: center; }
.badge-round { position: absolute; left: 22px; top: 19px; width: 16px; height: 16px; border-radius: 50%; background: #333; border: 1px solid #999; color: #fff; font: 700 10px/14px "Liberation Sans", sans-serif; text-align: center; }

/* player window */
.player { position: absolute; left: 76px; top: 70px; width: 1690px; height: 882px; display: flex; flex-direction: column; background: #2d2e35; box-shadow: 0 0 7px rgba(0, 0, 0, .45); color: #ddd; }
.p-title { height: 30px; flex: none; background: #383a44; display: flex; align-items: center; padding: 0 11px 0 7px; gap: 7px; position: relative; }
.p-name { position: absolute; left: 0; top: 5px; text-align: center; width: 1554px; font-size: 13px; line-height: 20px; color: #e6e6e6; }
.p-winbtns { margin-left: auto; display: flex; align-items: center; gap: 19px; }
.pw-gap { margin-left: 5px; }
.p-line { position: absolute; left: 765px; top: 30px; width: 520px; height: 3px; background: #fff; border: 1px solid #111; border-width: 0 0 1px; }
.p-main { flex: 1; display: flex; min-height: 0; }
.p-left { width: 1366px; display: flex; flex-direction: column; }
.excel { height: 738px; flex: none; display: flex; flex-direction: column; background: #e6e6e6; border-left: 1px solid #62c092; color: #333; }
.xl-head { height: 35px; flex: none; background: #217346; display: flex; align-items: center; color: #fff; position: relative; }
.xl-qat { display: flex; align-items: center; gap: 3px; padding-left: 21px; }
.q0 { margin-left: 12px; }
.q1 { margin-left: 6px; }
.q3 { margin-left: 5px; }
.q2 { margin-left: 16px; }
.xl-name { position: absolute; left: 560px; width: 240px; text-align: center; font-size: 12.500px; top: 7px; line-height: 18px; }
.xl-win { margin-left: auto; display: flex; gap: 35px; padding-right: 17px; }
.xl-tabs { height: 24px; flex: none; background: #217346; display: flex; align-items: stretch; color: #fff; font-size: 13px; }
.xt { text-align: center; line-height: 22px; }
.w61 { width: 62px; padding-right: 5px; } .w51 { width: 51px; } .w52 { width: 52px; } .w53 { width: 53px; } .w80 { width: 80px; }
.xt.act { background: #f1f1f1; color: #217346; }
.xt-tell { margin-left: 14px; display: flex; align-items: center; gap: 8px; font-size: 12.200px; color: #e6f3ec; }
.xt-login { margin-left: auto; line-height: 23px; margin-right: 11px; font-size: 12.500px; }
.xt-share { width: 58px; background: #1a5c38; margin-right: 15px; display: flex; align-items: center; justify-content: center; gap: 2px; font-size: 12.500px; height: 23px; }
.ribbon { height: 93px; flex: none; background: #f1f1f1; border-bottom: 1px solid #d0d0d0; display: flex; font-size: 12px; color: #555; position: relative; }
.grp { display: flex; flex-direction: column; position: relative; padding-top: 8px; }
.grp::after { content: ""; position: absolute; right: 0; top: 4px; bottom: 3px; width: 1px; background: #d0d0d0; }
.gb { flex: 1; min-height: 0; }
.gl { height: 18px; flex: none; text-align: center; color: #666; font-size: 12.500px; line-height: 16px; position: relative; }
.gl-clip { padding-right: 20px; } .gl-font { padding-right: 18px; } .gl-align { padding-right: 26px; }
.launch { position: absolute; right: 5px; bottom: 4px; width: 7px; height: 7px; border: 1px solid #888; border-width: 0 1px 1px 0; }
.g-clip { width: 85px; } .g-font { width: 250px; } .g-align { width: 238px; } .g-num { width: 141px; }
.g-style { width: 188px; } .g-cell { width: 135px; } .g-edit { width: 174px; } .g-mind { width: 97px; }
.clip { display: flex; padding-left: 10px; gap: 9px; }
.paste { display: flex; flex-direction: column; align-items: center; color: #b3b3b3; width: 30px; gap: 2px; font-size: 12.500px; line-height: 15px; }
.clipcol { display: flex; flex-direction: column; gap: 8px; padding-top: 1px; }
.fx { display: flex; align-items: center; }
.stack { display: flex; flex-direction: column; gap: 7px; padding-top: 2px; }
.rr { height: 24px; display: flex; align-items: center; padding-left: 4px; flex: none; }
.ml6 { padding-left: 7px; }
.ml4 { padding-left: 4px; }
.g-font .ml6 { padding-left: 4px; }
.inp { background: #fff; border: 1px solid #c6c6c6; height: 24px; display: flex; align-items: center; justify-content: space-between; padding: 0 5px 0 3px; font-size: 12.500px; color: #555; }
.w156 { width: 157px; } .w40 { width: 40px; } .w130 { width: 131px; margin-left: 1px; }
.growa { font: 16px "Liberation Sans", sans-serif; margin-left: 4px; display: flex; color: #444; }
.growa.sm { font-size: 13px; align-self: flex-end; margin-left: 7px; padding-bottom: 3px; }
.growa sup { font-size: 6px; color: #2d7fc8; line-height: 8px; }
.fb { width: 22px; font: 700 13.500px "Liberation Sans", sans-serif; color: #444; text-align: center; text-decoration: none; }
.fi { font-weight: 400; font-family: "Liberation Serif", serif; font-style: italic; }
u.fb { text-decoration: underline; }
.vs { width: 1px; height: 22px; background: #d0d0d0; margin: 0 9px; flex: none; }
.g-font .vs { margin: 0 7px; }
.g-align .vs { margin: 0 5px; }
.g-align .vs2a { margin: 0 7px 0 16px; }
.g-align .vs2b { margin: 0 7px 0 5px; }
.ind2 { margin-left: 4px; }
.bucket { width: 17px; display: flex; flex-direction: column; align-items: center; }
.bucket.fa { font: 700 14px/14px "Liberation Sans", sans-serif; color: #444; margin-left: 6px; }
.swy, .swr { width: 16px; height: 4px; display: block; }
.swy { background: #ffee00; } .swr { background: #f00; }
.wen { display: flex; flex-direction: column; align-items: center; font: 9px/10px "Liberation Sans", sans-serif; color: #555; }
.wen b { color: #2d7fc8; font: 11px/11px "Noto Sans CJK SC", sans-serif; }
.al { width: 22px; height: 22px; }
.al.on { background: #c6c6c6; }
.lab { display: flex; align-items: center; gap: 4px; font-size: 12.500px; white-space: nowrap; }
.cr.sp { margin-left: 8px; }
.pct { font: 17px "Liberation Sans", sans-serif; color: #555; margin-left: 9px; }
.cma { font: 700 15px "Liberation Serif", serif; color: #555; margin-left: 8px; }
.dec { font: 8.500px/9px "Liberation Sans", sans-serif; color: #555; width: 22px; text-align: center; }
.bigs { display: flex; justify-content: flex-start; }
.bigs.ctr { justify-content: center; }
.big { display: flex; flex-direction: column; align-items: center; line-height: 15px; font-size: 12.500px; white-space: nowrap; }
.big > svg:first-child { margin-bottom: 2px; }
.big .cr { margin: 5px 0 0; }
.l2line { display: flex; align-items: center; }
.l2line .cr { margin: 0 0 0 2px; }
.w62 { width: 62px; } .w58 { width: 58px; } .w42 { width: 42px; } .w66 { width: 66px; } .w97 { width: 97px; }
.editg { display: flex; padding-left: 4px; }
.editcol { display: flex; flex-direction: column; gap: 5px; width: 36px; padding-left: 4px; }
.collapse { position: absolute; right: 11px; bottom: 6px; }
.fbar { height: 49px; flex: none; display: flex; align-items: flex-start; padding: 11px 0 0 5px; background: #e6e6e6; }
.namebox, .fxbox, .finput { height: 27px; background: #fff; border: 1px solid #c6c6c6; display: flex; align-items: center; font-size: 14px; line-height: 24px; color: #555; }
.namebox { width: 102px; padding: 0 6px; justify-content: space-between; font-family: "Liberation Sans", sans-serif; }
.fdots { width: 30px; text-align: center; line-height: 26px; color: #999; }
.fxbox { width: 109px; justify-content: space-between; padding: 0 10px 0 13px; }
.fxbox .x { color: #bbb; font-weight: 400; font-size: 13px; }
.fxbox i { font: italic 700 14px "Liberation Serif", serif; color: #666; }
.finput { width: 1103px; margin-left: 5px; padding: 0 6px 0 10px; justify-content: space-between; }
.gridwrap { height: 487px; flex: none; display: flex; }
.gridclip { width: 1343px; height: 487px; overflow: hidden; position: relative; }
.sheet { width: 1343px; table-layout: fixed; border-collapse: collapse; font-size: 17.500px; color: #111; }
.c0 { width: 32px; } .ca { width: 251px; } .cb { width: 750px; } .cc { width: 120px; } .cd { width: 113px; } .ce { width: 77px; }
.sheet th { background: #e6e6e6; padding: 0; border-bottom: 1px solid #b0b0b0; border-right: 1px solid #c6c6c6; font: 400 17px/20px "Liberation Sans", sans-serif; letter-spacing: -.5px; color: #222; overflow: hidden; vertical-align: bottom; }
.sheet td { padding: 0; border: 1px solid #000; text-align: center; line-height: 20px; white-space: nowrap; overflow: hidden; vertical-align: bottom; }
.sheet .mid td, .sheet .mid th { vertical-align: middle; }
.sheet .h24 th, .sheet .h24 td, .sheet .h25 th, .sheet .h25 td, .sheet .h26 th, .sheet .h26 td { padding-top: 2px; }
.hh { height: 22px; }
.hh th { font-size: 16px; line-height: 19px; border-bottom: 1px solid #a6a6a6; letter-spacing: 0; }
.hh .he { padding-left: 40px; }
.sheet th.hsel { background: #d2d2d2; border-bottom: 2px solid #217346; }
.sheet th.hsel-row { background: #d2d2d2; color: #217346; border-right: 2px solid #217346; }
.corner { position: relative; }
.corner::after { content: ""; position: absolute; right: 4px; bottom: 3px; border: 7px solid transparent; border-right-color: #b8b8b8; border-bottom-color: #b8b8b8; }
.h23 { height: 23px; } .h24 { height: 24px; } .h25 { height: 25px; } .h26 { height: 26px; } .h28 { height: 28px; }
.sheet .or { background: #ffc000; }
.sheet .stage { font-weight: 700; vertical-align: middle; font-size: 18.300px; }
.sheet .gr { background: #80c688; }
.sheet .lt { background: #cde8d0; vertical-align: bottom; }
.sheet .mid .lt { vertical-align: middle; }
.sheet td[rowspan].lt { vertical-align: middle; padding-top: 2px; }
.sheet .yl { background: #ff0; }
.sheet .rd { background: #f00; }
.sheet .e { background: #cde8d0; border: solid #c6c6c6; border-width: 1px 0; border-left: 1px solid #000; }
.sheet .sel { position: relative; outline: 2px solid #217346; outline-offset: -1px; box-shadow: inset 0 0 0 2px #fff; }
.fill-handle { position: absolute; left: 1031px; top: 272px; width: 6px; height: 6px; background: #217346; border: 1px solid #fff; }
.cursor-dot { position: absolute; left: 812px; top: 241px; width: 48px; height: 48px; border-radius: 50%; background: #80c800; display: flex; align-items: center; justify-content: center; opacity: .97; }
.vscroll { flex: 1; display: flex; flex-direction: column; align-items: center; padding: 6px 0 0 0; background: #e6e6e6; }
.vbtn { width: 15px; height: 14px; background: #fff; border: 1px solid #c6c6c6; display: flex; align-items: center; justify-content: center; flex: none; }
.vtrack { flex: 1; width: 15px; background: #dcdcdc; padding-top: 254px; }
.vthumb { display: block; width: 15px; height: 164px; background: #fff; border: 1px solid #aaa; }
.sheetbar { height: 28px; flex: none; background: #e6e6e6; border-top: 1px solid #b8b8b8; display: flex; align-items: flex-start; position: relative; }
.sb-nav { width: 99px; display: flex; gap: 23px; padding: 10px 0 0 26px; }
.sb-tab { width: 69px; height: 25px; background: #fff; border: 1px solid #b8b8b8; border-top: 0; border-bottom: 2px solid #217346; text-align: center; color: #217346; font-size: 14px; line-height: 21px; font-family: "Liberation Sans", sans-serif; }
.sb-add { width: 16px; height: 16px; margin: 5px 0 0 33px; border: 1px solid #777; border-radius: 50%; text-align: center; line-height: 13px; color: #666; font: 700 14px/13px "Liberation Sans", sans-serif; }
.sb-dots { margin-left: 602px; color: #999; line-height: 26px; width: 18px; }
.hscroll { display: flex; height: 15px; margin-top: 6px; width: 506px; }
.hbtn { width: 15px; background: #fff; border: 1px solid #c6c6c6; display: flex; align-items: center; justify-content: center; }
.hthumb { width: 358px; background: #fff; border: 1px solid #b0b0b0; }
.htrack { flex: 1; background: #dcdcdc; }
.xstatus { height: 22px; flex: none; background: #f1f1f1; border-top: 1px solid #bdbdbd; display: flex; align-items: center; padding-left: 7px; font-size: 13px; color: #777; }
.xs-right { margin-left: auto; display: flex; align-items: center; height: 21px; }
.vw { width: 38px; height: 21px; display: flex; align-items: center; justify-content: center; }
.vw.on { background: #c6c6c6; }
.zm { width: 14px; font: 700 14px "Liberation Sans", sans-serif; text-align: center; color: #666; }
.zm-minus { margin-left: 3px; }
.slider { width: 100px; height: 1px; background: #aaa; position: relative; margin: 0 1px 0 -1px; }
.slider i { position: absolute; left: 52px; top: -7px; width: 4px; height: 15px; background: #666; }
.zpct { margin: 0 8px 0 9px; font: 13.500px "Liberation Sans", sans-serif; color: #666; }
.win7 { height: 30px; flex: none; background: linear-gradient(180deg, #6c7f9a, #8195b0 10%, #7f93ad); border-top: 1px solid #4e5a6e; display: flex; align-items: center; padding-left: 7px; position: relative; color: #fff; }
.orb { width: 40px; height: 40px; border-radius: 50%; margin-top: -8px; background: radial-gradient(circle at 50% 35%, #2b78b8, #0d3e72 70%, #5ad0e8); border: 1px solid #9fb6cc; display: flex; align-items: center; justify-content: center; flex: none; position: relative; z-index: 2; }
.w7ic { width: 46px; display: flex; justify-content: center; flex: none; }
.w7ic:nth-child(2) { margin-left: 12px; }
.w7task { width: 158px; height: 28px; margin-left: 4px; background: linear-gradient(180deg, #96a6bc, #8799b1); border: 1px solid #aab7c8; border-radius: 2px; display: flex; align-items: center; gap: 5px; padding-left: 9px; font-size: 13px; color: #f2f2f2; white-space: nowrap; }
.w7task.first { margin-left: 0; }
.w7second { gap: 3px; }
.w7tray { margin-left: auto; display: flex; align-items: center; gap: 8px; }
.tr-c { margin: 0 4px; }
.tr-s { margin: 0 2px; }
.w7clock { margin-left: 16px; font-size: 13px; width: 60px; white-space: nowrap; }
.w7show { width: 15px; height: 28px; background: linear-gradient(135deg, #9ab, #456); border: 1px solid #9ab; }
.pbar { flex: 1; background: #1e1e1e; display: flex; align-items: center; padding: 0 10px 0 8px; font-size: 13px; }
.ptime { width: 52px; color: #b0b0b0; margin-left: 8px; font-family: "Liberation Sans", sans-serif; text-align: center; flex: none; }
.ptime.p2 { margin-left: 0; }
.ptrack { flex: 1; height: 4px; background: #4a4a4a; margin: 0 3px; }
.pplayed { display: block; height: 4px; width: 508px; background: #1a8fe8; }
.pfw { margin-left: 10px; }
.pstop { width: 9px; height: 10px; background: #fff; border-radius: 2px; margin-left: 10px; flex: none; }
.panel { width: 324px; display: flex; flex-direction: column; background: #2d2e35; }
.pn-tabs { height: 41px; display: flex; flex: none; }
.pt { flex: 1; text-align: center; font-size: 15px; font-weight: 700; line-height: 42px; color: #ececec; border-bottom: 1px solid #202024; }
.pt.on { color: #1a8fe8; border-bottom: 2px solid #1a8fe8; }
.pn-sub { height: 32px; flex: none; background: #1c1c1e; display: flex; align-items: stretch; padding-left: 1px; }
.ps { width: 59px; margin-right: 1px; text-align: center; line-height: 32px; font-size: 13.500px; color: #eee; border-bottom: 1px solid #3a3a3e; }
.ps.on { color: #1a8fe8; border-bottom: 1px solid #1a8fe8; }
.ps-ic { flex: 1; display: flex; align-items: center; gap: 13px; padding-left: 34px; }
.plist { list-style: none; margin: 0; padding: 0; flex: 1; }
.plist li { height: 26px; display: flex; justify-content: space-between; align-items: center; padding: 0 3px 2px 7px; font-size: 14.800px; color: #b6b6ba; white-space: nowrap; }
.plist .pn { width: 250px; overflow: hidden; }
.plist li.cur { height: 52px; background: #383a44; display: block; color: #1a8fe8; padding: 0; }
.cur1 { height: 26px; display: flex; justify-content: space-between; align-items: center; padding: 0 3px 2px 7px; }
.playing { font-size: 15px; margin-top: -3px; }
.cur2 { height: 26px; display: flex; align-items: center; padding: 0 21px 2px 7px; font-size: 13.500px; font-family: "Liberation Sans", sans-serif; }
.res { margin-left: 17px; margin-right: auto; }
.pn-foot { height: 19px; text-align: center; font-size: 13px; color: #d0d0d0; line-height: 19px; flex: none; margin-top: auto; }
.controls { height: 65px; flex: none; border-top: 1px solid #5b5d66; background: linear-gradient(90deg, #353740, #3c3e48 30%, #525460 52%, #474954 78%, #343640); display: grid; grid-template-columns: 645px auto 1fr; align-items: center; }
.c-left { display: flex; align-items: center; padding-left: 11px; }
.cl2 { margin-left: 31px; }
.cl3 { margin-left: 24px; }
.vol { width: 57px; height: 3px; background: #1a8fe8; margin-left: 8px; }
.c-mid { display: flex; align-items: center; }
.ci { width: 36px; display: flex; justify-content: center; }
.ci-tight { margin-left: -2px; }
.ci.dim { color: #777; font-size: 15px; }
.playbtn { width: 46px; height: 46px; margin: 0 6px 0 7px; border-radius: 50%; background: #0a9bf5; box-shadow: 0 0 6px rgba(10, 155, 245, .6); display: flex; align-items: center; justify-content: center; }
.clarity { margin-left: 9px; width: 46px; height: 20px; border-radius: 10px; background: #3b3d45; color: #8a8a8e; font-size: 12px; line-height: 20px; text-align: center; white-space: nowrap; }
.c-right { display: flex; justify-content: flex-end; padding-right: 20px; height: 34px; }
.cbtn { width: 56px; background: #33343c; color: #c9c9cc; text-align: center; line-height: 34px; font-size: 12.500px; white-space: nowrap; border-left: 1px solid #3f4048; }
.cbtn.vip { width: 84px; color: #c9a36a; font-size: 12px; }
.cbtn.blue { color: #1a8fe8; }
```
